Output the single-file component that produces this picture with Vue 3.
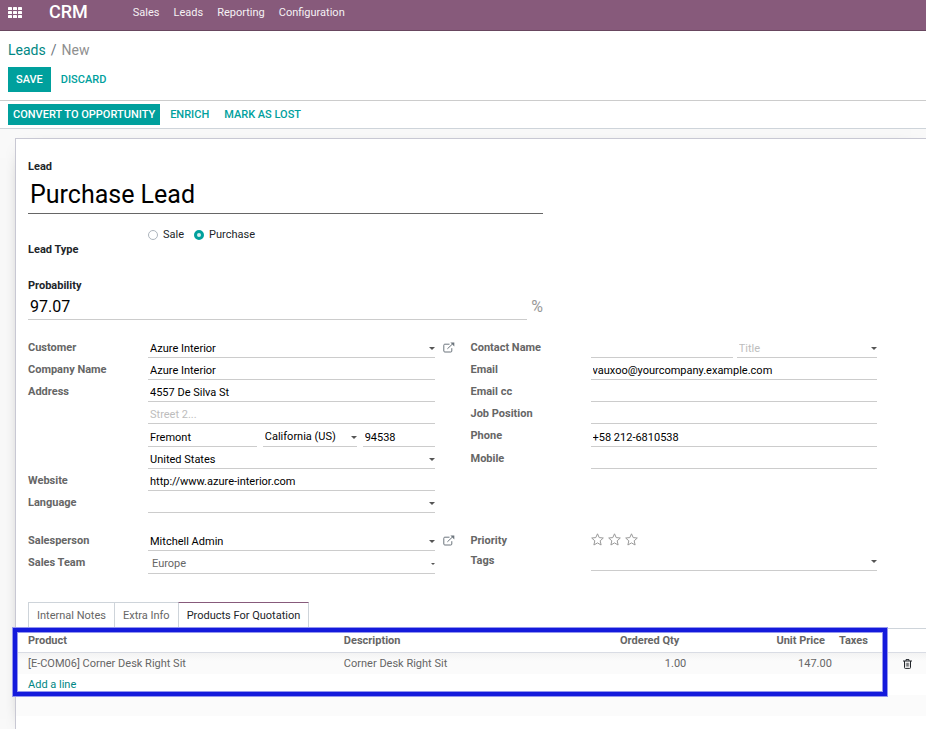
<script setup>
import { reactive, ref } from 'vue'

const menus = ['Sales', 'Leads', 'Reporting', 'Configuration']
const tabs = ['Internal Notes', 'Extra Info', 'Products For Quotation']
const activeTab = ref('Products For Quotation')

const lead = reactive({
  name: 'Purchase Lead',
  type: 'purchase',
  probability: '97.07',
  customer: 'Azure Interior',
  company: 'Azure Interior',
  street: '4557 De Silva St',
  street2: '',
  city: 'Fremont',
  state: 'California (US)',
  zip: '94538',
  country: 'United States',
  website: 'http://www.azure-interior.com',
  language: '',
  contact: '',
  title: '',
  email: 'vauxoo@yourcompany.example.com',
  emailCc: '',
  job: '',
  phone: '+58 212-6810538',
  mobile: '',
  salesperson: 'Mitchell Admin',
  team: 'Europe',
  priority: 0,
  tags: ''
})

const lines = ref([
  { product: '[E-COM06] Corner Desk Right Sit', description: 'Corner Desk Right Sit', qty: '1.00', price: '147.00', taxes: '' }
])

function addLine() {
  lines.value.push({ product: '', description: '', qty: '1.00', price: '0.00', taxes: '' })
}
</script>

<template>
  <div class="page">
    <header class="navbar">
      <button class="apps" aria-label="Applications">
        <svg width="14" height="11" viewBox="0 0 14 11" fill="#fff">
          <template v-for="r in 3" :key="r">
            <rect v-for="c in 3" :key="c" :x="(c - 1) * 5" :y="(r - 1) * 4" width="4" height="3" rx="0.6" />
          </template>
        </svg>
      </button>
      <a class="brand" href="#">CRM</a>
      <nav class="menus">
        <a v-for="m in menus" :key="m" href="#">{{ m }}</a>
      </nav>
    </header>

    <section class="control">
      <div class="crumbs"><a href="#">Leads</a><span class="slash">/</span><span class="current">New</span></div>
      <div class="actions">
        <button class="btn primary">Save</button>
        <button class="btn">Discard</button>
      </div>
    </section>

    <section class="statusbar">
      <button class="btn primary">Convert to Opportunity</button>
      <button class="btn">Enrich</button>
      <button class="btn">Mark as Lost</button>
    </section>

    <main class="backdrop">
      <form class="sheet" @submit.prevent>
        <div class="body">
          <div class="heading">
            <label class="dark" for="name">Lead</label>
            <input id="name" v-model="lead.name" class="title" type="text">
            <div class="type" role="radiogroup" aria-labelledby="type-label">
              <span id="type-label" class="dark type-label">Lead Type</span>
              <div class="radios">
                <label><input v-model="lead.type" type="radio" name="type" value="sale">Sale</label>
                <label><input v-model="lead.type" type="radio" name="type" value="purchase">Purchase</label>
              </div>
            </div>
            <label class="dark" for="probability">Probability</label>
            <div class="probability">
              <input id="probability" v-model="lead.probability" type="text">
              <span>%</span>
            </div>
          </div>

          <div class="groups">
            <div class="group wide">
              <label for="customer">Customer</label>
              <div class="pick"><select id="customer" v-model="lead.customer"><option>Azure Interior</option></select></div>
              <button class="external" aria-label="Open customer">
                <svg width="12" height="11" viewBox="0 0 12 11" fill="none" stroke="#6c757d">
                  <path d="M6.5 2.2H1.8Q.8 2.2.8 3.2V9Q.8 10 1.8 10H7.8Q8.8 10 8.8 9V6.2M4.4 6.8L9.6 1.9" />
                  <path d="M7.4.4H11.3V4.4Z" fill="#6c757d" stroke="none" />
                </svg>
              </button>

              <label for="company">Company Name</label>
              <input id="company" v-model="lead.company" type="text">

              <label for="street">Address</label>
              <input id="street" v-model="lead.street" type="text">
              <input v-model="lead.street2" class="field" type="text" placeholder="Street 2..." aria-label="Street 2">
              <div class="city field">
                <input v-model="lead.city" type="text" aria-label="City">
                <div class="pick"><select v-model="lead.state" aria-label="State"><option>California (US)</option></select></div>
                <input v-model="lead.zip" type="text" aria-label="ZIP">
              </div>
              <div class="pick field"><select v-model="lead.country" aria-label="Country"><option>United States</option></select></div>

              <label for="website">Website</label>
              <input id="website" v-model="lead.website" type="text">

              <label for="language">Language</label>
              <div class="pick"><select id="language" v-model="lead.language"><option value=""></option></select></div>
            </div>

            <div class="group">
              <label for="contact">Contact Name</label>
              <div class="contact">
                <input id="contact" v-model="lead.contact" type="text">
                <div class="pick"><select v-model="lead.title" class="empty" aria-label="Title"><option value="">Title</option></select></div>
              </div>
              <label for="email">Email</label>
              <input id="email" v-model="lead.email" type="email">
              <label for="cc">Email cc</label>
              <input id="cc" v-model="lead.emailCc" type="text">
              <label for="job">Job Position</label>
              <input id="job" v-model="lead.job" type="text">
              <label for="phone">Phone</label>
              <input id="phone" v-model="lead.phone" class="deep" type="tel">
              <label for="mobile">Mobile</label>
              <input id="mobile" v-model="lead.mobile" type="tel">
            </div>
          </div>

          <div class="groups">
            <div class="group wide">
              <label for="salesperson">Salesperson</label>
              <div class="pick"><select id="salesperson" v-model="lead.salesperson"><option>Mitchell Admin</option></select></div>
              <button class="external" aria-label="Open salesperson">
                <svg width="12" height="11" viewBox="0 0 12 11" fill="none" stroke="#6c757d">
                  <path d="M6.5 2.2H1.8Q.8 2.2.8 3.2V9Q.8 10 1.8 10H7.8Q8.8 10 8.8 9V6.2M4.4 6.8L9.6 1.9" />
                  <path d="M7.4.4H11.3V4.4Z" fill="#6c757d" stroke="none" />
                </svg>
              </button>
              <label for="team">Sales Team</label>
              <div class="pick deep muted"><select id="team" v-model="lead.team"><option>Europe</option></select></div>
            </div>
            <div class="group">
              <span class="caption">Priority</span>
              <div class="stars">
                <button v-for="n in 3" :key="n" :aria-label="'Priority ' + n" @click="lead.priority = n">
                  <svg width="13" height="13" viewBox="0 0 13 13" stroke="#999" stroke-linejoin="round" :fill="n <= lead.priority ? '#f3cc00' : 'none'">
                    <path d="M6.5.8L8.2 4.6L12.3 5L9.2 7.8L10.1 12L6.5 9.9L2.9 12L3.8 7.8L.7 5L4.8 4.6Z" />
                  </svg>
                </button>
              </div>
              <label for="tags">Tags</label>
              <div class="pick"><select id="tags" v-model="lead.tags"><option value=""></option></select></div>
            </div>
          </div>

          <div class="tabs" role="tablist">
            <button v-for="t in tabs" :key="t" role="tab" :aria-selected="t === activeTab" :class="{ active: t === activeTab }" @click="activeTab = t">{{ t }}</button>
          </div>
        </div>

        <div class="notebook">
          <table>
            <colgroup>
              <col class="c-product"><col class="c-description"><col class="c-number"><col class="c-number"><col class="c-taxes"><col>
            </colgroup>
            <thead>
              <tr><th>Product</th><th>Description</th><th class="num">Ordered Qty</th><th class="num">Unit Price</th><th>Taxes</th><th></th></tr>
            </thead>
            <tbody>
              <tr v-for="(line, i) in lines" :key="i">
                <td>{{ line.product }}</td>
                <td>{{ line.description }}</td>
                <td class="num">{{ line.qty }}</td>
                <td class="num">{{ line.price }}</td>
                <td>{{ line.taxes }}</td>
                <td class="remove">
                  <button aria-label="Delete line" @click="lines.splice(i, 1)">
                    <svg width="9" height="10" viewBox="0 0 9 10" fill="none" stroke="#212529">
                      <path d="M0 2H9M3 1.8V.6H6V1.8M1.5 2V8.6Q1.5 9.4 2.3 9.4H6.7Q7.5 9.4 7.5 8.6V2" />
                      <path d="M3.3 3.8V7.6M4.5 3.8V7.6M5.7 3.8V7.6" stroke-width=".6" />
                    </svg>
                  </button>
                </td>
              </tr>
              <tr class="plain"><td colspan="6"><button class="add" @click="addLine">Add a line</button></td></tr>
              <tr><td colspan="6"></td></tr>
            </tbody>
          </table>
          <div class="highlight"></div>
        </div>
      </form>
    </main>
  </div>
</template>

<style>
body {
  background: #fff;
  overflow-x: hidden;
}
</style>

<style scoped>
.page {
  display: flex;
  flex-direction: column;
  min-height: 100vh;
  font: 11px/16px Roboto, "Liberation Sans", sans-serif;
  color: #212529;
}
.page * { box-sizing: border-box; }
a { text-decoration: none; }
button, input, select {
  font: inherit;
  color: inherit;
  margin: 0;
  padding: 0;
  border: 0;
  background: none;
  border-radius: 0;
  min-width: 0;
}
button { cursor: pointer; }
svg { display: block; }

.navbar {
  display: flex;
  align-items: center;
  height: 31px;
  padding: 0 8px 6px;
  background: #875a7b;
  border-bottom: 1px solid #68465f;
}
.navbar a { color: #fff; }
.navbar .brand {
  margin: 0 45px 0 27px;
  font-size: 18px;
  font-weight: 500;
}
.menus { display: flex; gap: 14px; padding-top: 2px; }
.menus a { opacity: .92; }

.control { padding: 9px 8px 8px; border-bottom: 1px solid #ccc; }
.crumbs { font-size: 14px; line-height: 20px; color: #6c757d; }
.crumbs a { color: #008784; }
.slash { margin: 0 5px; }
.current { color: #8f8f8f; }
.actions { display: flex; gap: 2px; margin-top: 7px; }
.btn {
  font-weight: 500;
  text-transform: uppercase;
  color: #00a09d;
}
.actions .btn { height: 25px; padding: 0 8px; }
.btn.primary { background: #00a09d; color: #fff; }
.statusbar {
  display: flex;
  gap: 5px;
  padding: 3px 8px;
  border-bottom: 1px solid #ced4da;
}
.statusbar .btn { height: 21px; padding: 0 5px; }

.backdrop {
  display: flex;
  flex: 1;
  padding: 9px 0 0 15px;
  background: #f9f9f9;
  overflow: hidden;
}
.sheet {
  flex: 1;
  min-width: 0;
  border: solid #c8c8d3;
  border-width: 1px 0 0 1px;
  background: #fff;
  box-shadow: 0 5px 20px -15px #000;
}
.body { padding: 20px 49px 0 12px; }
.dark { display: block; font-weight: 700; }
.heading { width: 61%; padding-right: 3px; }
.title {
  display: block;
  width: 100%;
  height: 39px;
  padding: 0 2px;
  font-size: 25px;
  color: #000;
  border-bottom: 1px solid #666;
}
.type { display: flex; height: 48px; margin: 13px 0 3px; }
.type-label { width: 120px; padding-top: 15px; }
.radios { display: flex; gap: 10px; }
.radios label { display: flex; align-items: center; gap: 5px; height: 16px; }
.radios input {
  appearance: none;
  width: 10px;
  height: 10px;
  border: 1px solid #adb5bd;
  border-radius: 50%;
}
.radios input:checked {
  border: 3px solid #00a09d;
  background: #d5f0ef;
}
.probability { display: flex; align-items: flex-start; gap: 4px; font-size: 16px; }
.probability input {
  flex: 1;
  height: 26px;
  padding: 0 2px;
  color: #000;
  border-bottom: 1px solid #ccc;
}
.probability span { line-height: 26px; color: #999; }

.groups { display: flex; margin-top: 16px; }
.groups + .groups { margin-top: 16px; }
.group {
  display: grid;
  flex: 1 1 0;
  grid-template-columns: 120px minmax(0, 1fr);
  align-content: start;
  min-width: 0;
}
.wide {
  flex-basis: 36px;
  grid-template-columns: 120px minmax(0, 1fr) 36px;
}
.group label, .caption {
  grid-column: 1;
  padding-top: 4px;
  margin-bottom: -2px;
  font-weight: 700;
  color: #666;
}
.group input, .group select {
  width: 100%;
  height: 22px;
  padding: 4px 2px 0;
  color: #000;
  border-bottom: 1px solid #ccc;
}
.field { grid-column: 2; }
input::placeholder { color: #bdbdbd; opacity: 1; }
.group .empty { color: #bdbdbd; }
.pick { display: grid; align-items: center; }
.pick select { grid-area: 1 / 1; appearance: none; }
.pick::after {
  content: "";
  grid-area: 1 / 1;
  justify-self: end;
  border: 3px solid transparent;
  border-top-color: #555;
  border-bottom: 0;
  margin-top: 3px;
  pointer-events: none;
}
.city {
  display: grid;
  grid-template-columns: 109fr 94fr 72fr;
  gap: 6px;
}
.group .city input, .group .city select, .group .deep, .group .deep select { height: 23px; }
.group .muted select { padding-left: 4px; color: #666; }
.muted::after { border-width: 2px 2px 0; }
.contact { display: grid; grid-template-columns: 142fr 140fr; gap: 4px; }
.external { align-self: center; justify-self: start; margin-left: 8px; }
.stars { display: flex; align-items: center; gap: 4px; height: 20px; }

.tabs { display: flex; margin-top: 28px; }
.tabs button {
  height: 26px;
  padding: 0 8px;
  color: #666;
  border: solid #ced4da;
  border-width: 1px 0 0 1px;
}
.tabs .active {
  color: #212529;
  border-top-color: #875a7b;
  border-right-width: 1px;
}

.notebook { position: relative; border-top: 1px solid #ced4da; }
.highlight {
  position: absolute;
  top: -1px;
  left: -3px;
  right: 39px;
  height: 68px;
  border: 4px solid #141adc;
  box-shadow: 0 0 0 1px #9496ee, inset 0 0 0 1px #9496ee;
  pointer-events: none;
}
table {
  width: 100%;
  table-layout: fixed;
  border-collapse: separate;
  border-spacing: 0;
  color: #666;
}
.c-product { width: 35.7%; }
.c-description { width: 22.4%; }
.c-number { width: 16%; }
.c-taxes { width: 7%; }
th, td {
  height: 21px;
  padding: 0 3px;
  text-align: left;
  white-space: nowrap;
}
th {
  height: 24px;
  border-bottom: 1px solid #d9dce4;
}
th:first-child, td:first-child { padding-left: 12px; }
.num { text-align: right; padding-right: 4px; }
th.num { padding-right: 11px; }
tbody tr { background: #fbfbfb; }
tbody tr:first-child { background: linear-gradient(#f3f3f3, #fbfbfb 8px); }
tbody .plain { background: #fff; }
.remove button { display: block; }
.add { color: #008784; }
</style>
